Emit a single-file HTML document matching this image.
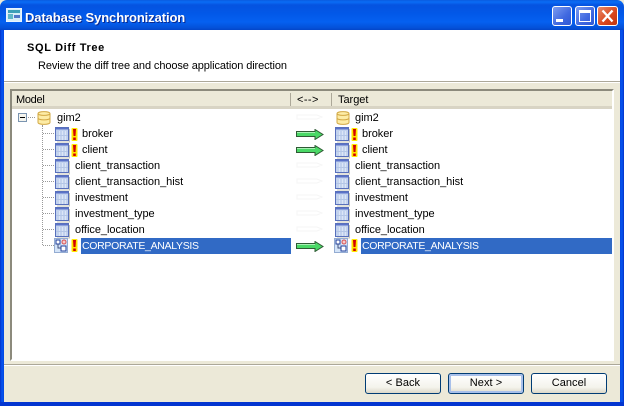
<!DOCTYPE html>
<html><head><meta charset="utf-8">
<style>
html,body{margin:0;padding:0;background:#ece9d8}
#w{position:relative;width:624px;height:406px;overflow:hidden;background:#ece9d8;font:11px/14px "Liberation Sans",sans-serif;color:#000}
#w div,#w svg{position:absolute}
.t{white-space:nowrap;letter-spacing:-.03px}
#w .s{color:#fff;font-size:10.5px;letter-spacing:-.3px}
.b{box-sizing:border-box;height:21px;width:76px;top:373px;border:1px solid #003c74;border-radius:3px;background:linear-gradient(#fff,#f4f3ec 70%,#dcd8c8);text-align:center;line-height:19px;font-size:11px;letter-spacing:.05px}
</style></head><body>
<div id="w">
<svg width="0" height="0" style="position:absolute">
<defs>
<symbol id="tb" viewBox="0 0 16 16"><rect x=".5" y=".5" width="13" height="13" fill="#c2d2ee" stroke="#5870bc"/><rect x="1" y="1" width="12" height="1.500" fill="#5a72c8"/><path d="M4.500 4v9M7.500 4v9M10.500 4v9" stroke="#dce6f6"/><path d="M1 8.500h12" stroke="#b4c6e6"/><path d="M14.500 2v13H2" stroke="#c4c4ba" fill="none"/></symbol>
<symbol id="db" viewBox="0 0 14 16"><path d="M1 3.500C1 1 13 1 13 3.500V12.500C13 15 1 15 1 12.500Z" fill="#fdeca6" stroke="#d2a844"/><path d="M1 3.500C1 6 13 6 13 3.500M1 8C1 10.500 13 10.500 13 8" fill="none" stroke="#d2a844"/></symbol>
<symbol id="ex" viewBox="0 0 7 13"><rect x=".5" y="0" width="6" height="13" fill="#ffe800" rx="1"/><path d="M2 1H5L4.500 8H2.500Z" fill="#d40000"/><rect x="2.200" y="9.500" width="2.600" height="2.500" fill="#d40000"/></symbol>
<symbol id="ar" viewBox="0 0 28 11"><path d="M.5 2.500H19V.5L27 5.500 19 10.500V7.500H.5Z" fill="#4ad866" stroke="#2f5a34"/><path d="M1 3.500H19" stroke="#a8f0b4"/></symbol>
<symbol id="gh" viewBox="0 0 30 10"><path d="M2 3h20l5 2-5 2H2Z" fill="none" stroke="#f5f5f5"/></symbol>
<symbol id="vw" viewBox="0 0 16 16"><rect x=".5" y=".5" width="13" height="14" fill="#d4e4f8" stroke="#94acd2"/><rect x="2" y="2" width="4" height="4" fill="#fff" stroke="#1f3f9c"/><rect x="7" y="8" width="5" height="5" fill="#fff" stroke="#1f3f9c"/><circle cx="10" cy="4" r="2" fill="#f6cccc" stroke="#d85050"/><path d="M4 6v4h3" stroke="#405080" fill="none"/></symbol>
</defs></svg>

<!-- title bar -->
<div style="left:0;top:0;width:624px;height:30px;border-radius:7px 7px 0 0;background:linear-gradient(#0a5be0 0,#0a6cf5 2px,#0553e0 5px,#0258e8 14px,#0560f0 22px,#0450d8 28px,#0345c8 30px)"></div>
<div style="left:0;top:30px;width:4px;height:376px;background:linear-gradient(90deg,#0331c8,#0655f0 50%,#0346e0)"></div>
<div style="left:620px;top:30px;width:4px;height:376px;background:linear-gradient(90deg,#0346e0,#0655f0 50%,#0331c8)"></div>
<div style="left:0;top:402px;width:624px;height:4px;background:#0335d0"></div>
<svg style="left:6px;top:8px" width="16" height="14" viewBox="0 0 16 14"><rect x=".5" y=".5" width="15" height="13" fill="#d8eef8" stroke="#e8f4ff"/><rect x="2" y="2" width="12" height="3" fill="#3ca0b8"/><rect x="2" y="6" width="5" height="5" fill="#60b8c8"/><rect x="8" y="7" width="6" height="3" fill="#5078c8"/></svg>
<div class="t" style="left:25px;top:10px;font:bold 13px/15px 'Liberation Sans',sans-serif;color:#fff;text-shadow:1px 1px #0a2a90;letter-spacing:-.1px">Database Synchronization</div>
<!-- caption buttons -->
<div style="left:552px;top:6px;box-sizing:border-box;width:20px;height:20px;border:1px solid #fff;border-radius:3px;background:linear-gradient(135deg,#7c9cf0,#3f68e0 60%,#3058d4)"></div>
<div style="left:556px;top:19px;width:7px;height:3px;background:#fff"></div>
<div style="left:575px;top:6px;box-sizing:border-box;width:20px;height:20px;border:1px solid #fff;border-radius:3px;background:linear-gradient(135deg,#7c9cf0,#3f68e0 60%,#3058d4)"></div>
<div style="left:579px;top:10px;box-sizing:border-box;width:12px;height:12px;border:1px solid #fff;border-top-width:3px"></div>
<div style="left:597px;top:6px;box-sizing:border-box;width:21px;height:20px;border:1px solid #fff;border-radius:3px;background:linear-gradient(135deg,#ea8a68,#d8451c 60%,#c03510)"></div>
<svg style="left:597px;top:6px" width="21" height="20"><path d="M5.500 4.500L15.500 15.500M15.500 4.500L5.500 15.500" stroke="#fff" stroke-width="2.300"/></svg>

<!-- header -->
<div style="left:4px;top:30px;width:616px;height:51px;background:#fff"></div>
<div style="left:4px;top:81px;width:616px;height:1px;background:#aca899"></div>
<div style="left:4px;top:82px;width:616px;height:1px;background:#fff"></div>
<div class="t" style="left:27px;top:41px;font:bold 11px/14px 'Liberation Sans',sans-serif;letter-spacing:.65px">SQL Diff Tree</div>
<div class="t" style="left:38px;top:59px;letter-spacing:-.1px">Review the diff tree and choose application direction</div>

<!-- tree panel -->
<div style="left:10px;top:89px;box-sizing:border-box;width:604px;height:272px;border:2px solid;border-color:#8c8a7c #fff #fff #8c8a7c;background:#fff"></div>
<div style="left:12px;top:91px;width:600px;height:15px;background:#ece9d8;border-bottom:3px solid #d8d4c4"></div>
<div style="left:290px;top:93px;width:1px;height:13px;background:#aca899"></div>
<div style="left:331px;top:93px;width:1px;height:13px;background:#aca899"></div>
<div class="t" style="left:16px;top:93px;letter-spacing:-.3px">Model</div>
<div class="t" style="left:297px;top:93px;letter-spacing:.4px">&lt;--&gt;</div>
<div class="t" style="left:338px;top:93px">Target</div>

<!-- tree lines -->
<div style="left:42px;top:125px;height:120px;width:0;border-left:1px dotted #999"></div>
<div style="left:28px;top:117px;width:7px;border-top:1px dotted #999"></div>
<div style="left:43px;top:133px;width:11px;border-top:1px dotted #999"></div>
<div style="left:43px;top:149px;width:11px;border-top:1px dotted #999"></div>
<div style="left:43px;top:165px;width:11px;border-top:1px dotted #999"></div>
<div style="left:43px;top:181px;width:11px;border-top:1px dotted #999"></div>
<div style="left:43px;top:197px;width:11px;border-top:1px dotted #999"></div>
<div style="left:43px;top:213px;width:11px;border-top:1px dotted #999"></div>
<div style="left:43px;top:229px;width:11px;border-top:1px dotted #999"></div>
<div style="left:43px;top:245px;width:11px;border-top:1px dotted #999"></div>
<div style="left:18px;top:113px;box-sizing:border-box;width:9px;height:9px;border:1px solid #7a94b0;background:#f4f4ee"></div>
<div style="left:20px;top:117px;width:5px;height:1px;background:#000"></div>

<!-- left icons -->
<svg style="left:37px;top:110px" width="14" height="16"><use href="#db"/></svg>
<svg style="left:55px;top:127px" width="16" height="16"><use href="#tb"/></svg>
<svg style="left:55px;top:143px" width="16" height="16"><use href="#tb"/></svg>
<svg style="left:55px;top:159px" width="16" height="16"><use href="#tb"/></svg>
<svg style="left:55px;top:175px" width="16" height="16"><use href="#tb"/></svg>
<svg style="left:55px;top:191px" width="16" height="16"><use href="#tb"/></svg>
<svg style="left:55px;top:207px" width="16" height="16"><use href="#tb"/></svg>
<svg style="left:55px;top:223px" width="16" height="16"><use href="#tb"/></svg>
<svg style="left:54px;top:238px" width="16" height="16"><use href="#vw"/></svg>
<svg style="left:71px;top:128px" width="7" height="13"><use href="#ex"/></svg>
<svg style="left:71px;top:144px" width="7" height="13"><use href="#ex"/></svg>
<svg style="left:71px;top:239px" width="7" height="13"><use href="#ex"/></svg>

<!-- left text -->
<div class="t" style="left:57px;top:111px">gim2</div>
<div class="t" style="left:82px;top:127px">broker</div>
<div class="t" style="left:82px;top:143px">client</div>
<div class="t" style="left:75px;top:159px">client_transaction</div>
<div class="t" style="left:75px;top:175px">client_transaction_hist</div>
<div class="t" style="left:75px;top:191px">investment</div>
<div class="t" style="left:75px;top:207px">investment_type</div>
<div class="t" style="left:75px;top:223px">office_location</div>
<div style="left:81px;top:238px;width:210px;height:16px;background:#316ac5"></div>
<div class="t s" style="left:82px;top:239px">CORPORATE_ANALYSIS</div>

<!-- arrows -->
<svg style="left:295px;top:112px" width="30" height="10"><use href="#gh"/></svg>
<svg style="left:296px;top:129px" width="28" height="11"><use href="#ar"/></svg>
<svg style="left:296px;top:145px" width="28" height="11"><use href="#ar"/></svg>
<svg style="left:295px;top:160px" width="30" height="10"><use href="#gh"/></svg>
<svg style="left:295px;top:176px" width="30" height="10"><use href="#gh"/></svg>
<svg style="left:295px;top:192px" width="30" height="10"><use href="#gh"/></svg>
<svg style="left:295px;top:208px" width="30" height="10"><use href="#gh"/></svg>
<svg style="left:295px;top:224px" width="30" height="10"><use href="#gh"/></svg>
<svg style="left:296px;top:241px" width="28" height="11"><use href="#ar"/></svg>

<!-- right icons -->
<svg style="left:336px;top:110px" width="14" height="16"><use href="#db"/></svg>
<svg style="left:335px;top:127px" width="16" height="16"><use href="#tb"/></svg>
<svg style="left:335px;top:143px" width="16" height="16"><use href="#tb"/></svg>
<svg style="left:335px;top:159px" width="16" height="16"><use href="#tb"/></svg>
<svg style="left:335px;top:175px" width="16" height="16"><use href="#tb"/></svg>
<svg style="left:335px;top:191px" width="16" height="16"><use href="#tb"/></svg>
<svg style="left:335px;top:207px" width="16" height="16"><use href="#tb"/></svg>
<svg style="left:335px;top:223px" width="16" height="16"><use href="#tb"/></svg>
<svg style="left:334px;top:238px" width="16" height="16"><use href="#vw"/></svg>
<svg style="left:351px;top:128px" width="7" height="13"><use href="#ex"/></svg>
<svg style="left:351px;top:144px" width="7" height="13"><use href="#ex"/></svg>
<svg style="left:351px;top:239px" width="7" height="13"><use href="#ex"/></svg>

<!-- right text -->
<div class="t" style="left:355px;top:111px">gim2</div>
<div class="t" style="left:362px;top:127px">broker</div>
<div class="t" style="left:362px;top:143px">client</div>
<div class="t" style="left:355px;top:159px">client_transaction</div>
<div class="t" style="left:355px;top:175px">client_transaction_hist</div>
<div class="t" style="left:355px;top:191px">investment</div>
<div class="t" style="left:355px;top:207px">investment_type</div>
<div class="t" style="left:355px;top:223px">office_location</div>
<div style="left:361px;top:238px;width:251px;height:16px;background:#316ac5"></div>
<div class="t s" style="left:362px;top:239px">CORPORATE_ANALYSIS</div>

<!-- footer -->
<div style="left:4px;top:364px;width:616px;height:1px;background:#aca899"></div>
<div style="left:4px;top:365px;width:616px;height:1px;background:#fff"></div>
<div class="b" style="left:365px;">&lt; Back</div>
<div class="b" style="left:448px;box-shadow:inset 0 0 0 2px #a8c0ea">Next &gt;</div>
<div class="b" style="left:531px;">Cancel</div>
</div>
</body></html>
